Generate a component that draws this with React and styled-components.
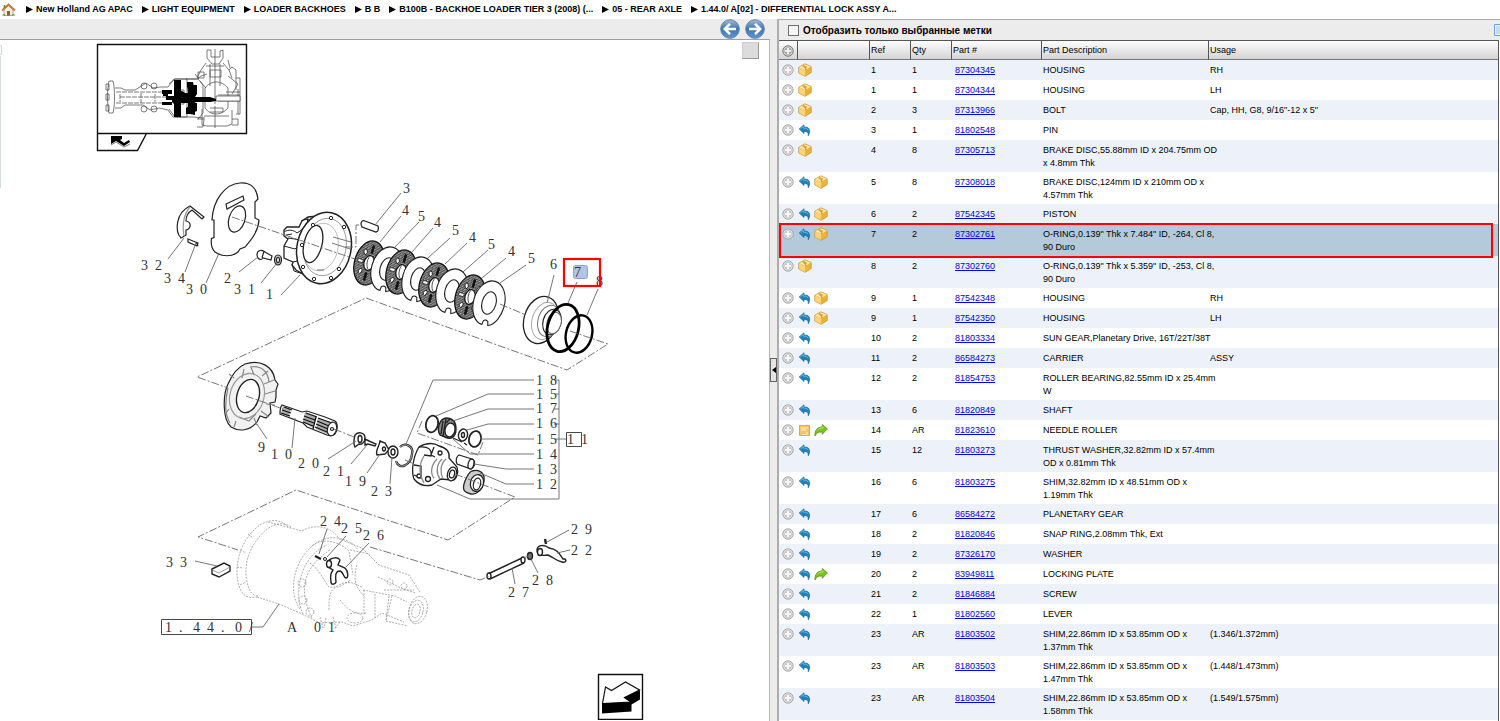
import React, { useState } from 'react';
import styled, { createGlobalStyle } from 'styled-components';

const GlobalStyle = createGlobalStyle`
  * {
    box-sizing: border-box;
  }

  body {
    margin: 0;
    background: #fff;
    color: #000;
    font-family: 'Liberation Sans', Arial, sans-serif;
    font-size: 9px;
    line-height: 13px;
  }
`;

const Page = styled.div`
  display: flex;
  flex-direction: column;
  min-height: 100vh;
`;

const Breadcrumbs = styled.nav`
  display: flex;
  align-items: center;
  gap: 9px;
  height: 19px;
  padding-left: 1px;
  overflow: hidden;
  white-space: nowrap;
`;

const Crumb = styled.a`
  display: flex;
  align-items: center;
  gap: 3px;
  color: #000;
  font-size: 9px;
  font-weight: bold;
  text-decoration: none;
`;

const HomeLink = styled.a`
  display: flex;
  margin-right: 1px;
`;

const Workspace = styled.main`
  display: grid;
  grid-template-columns: minmax(0, 770fr) 9px minmax(0, 721fr);
  flex: 1;
`;

const DrawingPane = styled.section`
  display: flex;
  flex-direction: column;
  overflow: hidden;
`;

const Toolbar = styled.div`
  display: flex;
  align-items: center;
  height: 21px;
  background: #ececec;
  overflow: hidden;
`;

const DrawingToolbar = styled(Toolbar)`
  justify-content: flex-end;
  gap: 5px;
  padding-right: 5px;
  border-bottom: 1px solid #a0a0a0;
`;

const RoundButton = styled.button`
  display: flex;
  width: 20px;
  height: 20px;
  padding: 0;
  border: 0;
  background: none;
`;

const Canvas = styled.div`
  display: flex;
  flex: 1;
  position: relative;
  border-right: 1px solid #b4b4b4;
`;

const SquareButton = styled.button`
  position: absolute;
  top: 2px;
  right: 10px;
  width: 17px;
  height: 17px;
  padding: 0;
  border: 1px solid #999;
  border-top-color: #ccc;
  border-left-color: #ccc;
  background: #dcdcdc;
`;

const Callout = styled.text`
  font-family: 'Liberation Serif', 'Times New Roman', serif;
  font-size: 14px;
  fill: #333;
`;

const Splitter = styled.div`
  display: flex;
  align-items: center;
  background: #ececec;
  border-right: 2px solid #adadad;
`;

const SplitterHandle = styled.button`
  display: flex;
  align-items: center;
  justify-content: center;
  width: 8px;
  height: 24px;
  padding: 0;
  border: 1px solid #666;
  background: #e4e4e4;
`;

const PartsPane = styled.section`
  display: flex;
  flex-direction: column;
  overflow: hidden;
`;

const PartsToolbar = styled(Toolbar)`
  justify-content: space-between;
  padding-left: 9px;
  border-top: 1px solid #aaa;
`;

const FilterLabel = styled.label`
  display: flex;
  align-items: center;
  gap: 4px;
  font-size: 10px;
  font-weight: bold;
`;

const Checkbox = styled.input`
  appearance: none;
  width: 11px;
  height: 11px;
  margin: 0;
  border: 1px solid #6e6e6e;
  background: #f6f6f6;

  &:checked {
    background: #3a6ea5;
  }
`;

const TableFrame = styled.div`
  flex: 1;
  margin-right: 1px;
  border-right: 1px solid #555;
`;

const Table = styled.table`
  width: 100%;
  table-layout: fixed;
  border-collapse: separate;
  border-spacing: 0;
`;

const HeadCell = styled.th`
  height: 20px;
  padding: 0 0 0 1px;
  border-top: 1px solid #555;
  border-bottom: 1px solid #777;
  border-left: ${({ $first }) => ($first ? '0' : '1px solid #555')};
  background: linear-gradient(#fdfdfd, #d4d4d4);
  font-weight: normal;
  text-align: left;
`;

const Row = styled.tr`
  position: relative;
  background: ${({ $selected }) => ($selected ? '#b4cada' : '#fff')};

  &:nth-child(odd) {
    background: ${({ $selected }) => ($selected ? '#b4cada' : '#edf2fa')};
  }
`;

const Cell = styled.td`
  padding: ${({ $indent }) => `4px 0 2px ${$indent || 2}px`};
  vertical-align: top;
  white-space: pre;
  height: 20px;
`;

const IconCell = styled(Cell)`
  padding: 3px 0 0 1px;
`;

const Icons = styled.div`
  display: flex;
  gap: 3px;
  height: 14px;
`;

const ExpandButton = styled.button`
  display: flex;
  margin: 1px 0 0 2px;
  padding: 0;
  border: 0;
  background: none;
`;

const PartLink = styled.a`
  color: #0000f0;
`;

const RowFrame = styled.span`
  position: absolute;
  z-index: 1;
  top: -1px;
  right: 5px;
  bottom: -2px;
  left: 0;
  border: 2px solid #f00;
  pointer-events: none;
`;

const CRUMBS = [
  'New Holland AG APAC',
  'LIGHT EQUIPMENT',
  'LOADER BACKHOES',
  'B B',
  'B100B - BACKHOE LOADER TIER 3 (2008) (...',
  '05 - REAR AXLE',
  '1.44.0/  A[02] - DIFFERENTIAL LOCK ASSY A...',
];

// icons: b = box, u = undo arrow, n = note, f = forward arrow
const PARTS = [
  ['b', '1', '1', '87304345', 'HOUSING', 'RH'],
  ['b', '1', '1', '87304344', 'HOUSING', 'LH'],
  ['b', '2', '3', '87313966', 'BOLT', 'Cap, HH, G8, 9/16"-12 x 5"'],
  ['u', '3', '1', '81802548', 'PIN', ''],
  ['b', '4', '8', '87305713', 'BRAKE DISC,55.88mm ID x 204.75mm OD\nx 4.8mm Thk', ''],
  ['ub', '5', '8', '87308018', 'BRAKE DISC,124mm ID x 210mm OD x\n4.57mm Thk', ''],
  ['ub', '6', '2', '87542345', 'PISTON', ''],
  ['ub', '7', '2', '87302761', 'O-RING,0.139" Thk x 7.484" ID, -264, Cl 8,\n90 Duro', ''],
  ['b', '8', '2', '87302760', 'O-RING,0.139" Thk x 5.359" ID, -253, Cl 8,\n90 Duro', ''],
  ['ub', '9', '1', '87542348', 'HOUSING', 'RH'],
  ['ub', '9', '1', '87542350', 'HOUSING', 'LH'],
  ['u', '10', '2', '81803334', 'SUN GEAR,Planetary Drive, 16T/22T/38T', ''],
  ['u', '11', '2', '86584273', 'CARRIER', 'ASSY'],
  ['u', '12', '2', '81854753', 'ROLLER BEARING,82.55mm ID x 25.4mm\nW', ''],
  ['u', '13', '6', '81820849', 'SHAFT', ''],
  ['nf', '14', 'AR', '81823610', 'NEEDLE ROLLER', ''],
  ['u', '15', '12', '81803273', 'THRUST WASHER,32.82mm ID x 57.4mm\nOD x 0.81mm Thk', ''],
  ['u', '16', '6', '81803275', 'SHIM,32.82mm ID x 48.51mm OD x\n1.19mm Thk', ''],
  ['u', '17', '6', '86584272', 'PLANETARY GEAR', ''],
  ['u', '18', '2', '81820846', 'SNAP RING,2.08mm Thk, Ext', ''],
  ['u', '19', '2', '87326170', 'WASHER', ''],
  ['uf', '20', '2', '83949811', 'LOCKING PLATE', ''],
  ['u', '21', '2', '81846884', 'SCREW', ''],
  ['u', '22', '1', '81802560', 'LEVER', ''],
  ['u', '23', 'AR', '81803502', 'SHIM,22.86mm ID x 53.85mm OD x\n1.37mm Thk', '(1.346/1.372mm)'],
  ['u', '23', 'AR', '81803503', 'SHIM,22.86mm ID x 53.85mm OD x\n1.47mm Thk', '(1.448/1.473mm)'],
  ['u', '23', 'AR', '81803504', 'SHIM,22.86mm ID x 53.85mm OD x\n1.58mm Thk', '(1.549/1.575mm)'],
];

const HomeIcon = () => (
  <svg width="15" height="14" viewBox="0 0 15 14">
    <path d="M3 6.5 7.5 2.5 12 6.5V12.5H3Z" fill="#f6efe0" stroke="#9a8a70" strokeWidth=".8" />
    <path d="M1 7.5 7.5 1.5 14 7.5" fill="none" stroke="#c4783a" strokeWidth="1.8" />
    <path d="M3.5 2v3" stroke="#9a6a40" strokeWidth="1.5" />
    <path d="M6 8h3v4.5H6Z" fill="#87603c" />
    <path d="M1 12.500c1-2 3-1.500 3.500 0ZM10.500 12.500c.5-1.500 3-2 4 0Z" fill="#5a9c3c" />
  </svg>
);

const CrumbArrow = () => (
  <svg width="7" height="7" viewBox="0 0 7 7">
    <path d="M0 0 7 3.5 0 7Z" />
  </svg>
);

const RoundArrow = ({ flip }) => (
  <svg width="20" height="20" viewBox="0 0 20 20">
    <defs>
      <linearGradient id="round" x1="0" y1="0" x2="0" y2="1">
        <stop offset="0" stopColor="#9dbbd9" />
        <stop offset=".5" stopColor="#3f74ac" />
        <stop offset="1" stopColor="#5c9bd4" />
      </linearGradient>
    </defs>
    <circle cx="10" cy="10" r="9.3" fill="url(#round)" stroke="#6382a6" />
    <path
      d="M16 10H5.5M10 4.800 4.800 10 10 15.200"
      fill="none"
      stroke="#fff"
      strokeWidth="2.6"
      transform={flip ? 'matrix(-1 0 0 1 20 0)' : undefined}
    />
  </svg>
);

const PlusIcon = ({ dark }) => (
  <svg width="12" height="12" viewBox="0 0 12 12">
    <circle cx="6" cy="6" r="5.2" fill={dark ? '#aaa' : '#c9c9c9'} stroke={dark ? '#777' : '#a8a8a8'} />
    <circle cx="6" cy="6" r="4.1" fill="none" stroke="#e6e6e6" strokeWidth=".7" />
    <path d="M6 3v6M3 6h6" stroke="#fff" strokeWidth="1.6" />
  </svg>
);

const BoxIcon = () => (
  <svg width="14" height="14" viewBox="0 0 14 14">
    <path d="M.8 4.200 7 .8l6.200 2.800v6L7.200 13.300.8 10Z" fill="#f0b036" stroke="#c9943a" strokeWidth=".8" />
    <path d="M1.200 4.200 7 1.200l5.800 2.600L7.200 7Z" fill="#fdeab0" />
    <path d="M7.200 7v6L1.200 9.900V4.400Z" fill="#fad478" />
    <path d="m5.500 2 4 2-1 .6v2l-1.500.8V5.600L4 3Z" fill="#d9a23c" />
  </svg>
);

const UndoIcon = () => (
  <svg width="13" height="14" viewBox="0 0 13 14">
    <path d="M1.200 6 6 1.800v2.300c5.200-.4 7.200 3 4.300 8.700.3-3-.9-4.400-4.300-4.300v2Z" fill="#2080ba" stroke="#1b6898" strokeWidth=".7" />
    <path d="m2.500 5.900 2.800-2.500v1.700c2.700 0 4.300.6 5 2" fill="none" stroke="#79c3e6" strokeWidth=".8" />
  </svg>
);

const ForwardIcon = () => (
  <svg width="14" height="14" viewBox="0 0 14 14">
    <path d="M13.300 5.800 8.300 1.500v2.400C3.500 4 .8 7 .9 13c1.200-3 3.500-4.300 7.400-4v2.300Z" fill="#7ac51c" stroke="#4f9414" strokeWidth=".8" />
    <path d="M3 7.500c1.500-2 3.500-2.500 6-2.500V3.500" fill="none" stroke="#c0ea7c" strokeWidth=".8" />
  </svg>
);

const NoteIcon = () => (
  <svg width="13" height="14" viewBox="0 0 13 14">
    <path d="M1.500 2.500h10v10h-10Z" fill="#fbc463" stroke="#eda53a" />
    <path d="M3 5h7M3 7h5M4 11.500h5V9" stroke="#fff0cf" fill="none" />
  </svg>
);

const ReportIcon = () => (
  <svg width="6" height="12" viewBox="0 0 6 12">
    <path d="M.5.5H7v11H.5Z" fill="#f0f6ff" stroke="#6f9fd8" />
    <path d="M2 3h5M2 5h5M2 7h5M2 9h5" stroke="#9cc0ea" />
  </svg>
);

const ICONS = { b: BoxIcon, u: UndoIcon, n: NoteIcon, f: ForwardIcon };

const CALLOUTS = [
  [141, 270, '3 2'], [164, 283, '3 4'], [186, 294, '3 0'], [224, 283, '2'], [234, 294, '3 1'],
  [266, 299, '1'], [403, 193, '3'], [402, 215, '4'], [418, 221, '5'], [434, 227, '4'],
  [452, 235, '5'], [469, 242, '4'], [488, 249, '5'], [508, 256, '4'], [528, 263, '5'],
  [550, 269, '6'], [574, 277, '7'], [596, 286, '8'], [258, 452, '9'], [271, 459, '1 0'],
  [298, 468, '2 0'], [323, 476, '2 1'], [345, 486, '1 9'], [371, 496, '2 3'],
  [536, 385, '1 8'], [536, 399, '1 5'], [536, 413, '1 7'], [536, 428, '1 6'],
  [536, 444, '1 5'], [536, 459, '1 4'], [536, 474, '1 3'], [536, 489, '1 2'],
  [567, 444, '1 1'], [320, 526, '2 4'], [341, 533, '2 5'], [363, 540, '2 6'],
  [166, 567, '3 3'], [165, 632, '1 . 4 4 . 0 /'], [287, 632, 'A'], [314, 632, '0 1'],
  [571, 534, '2 9'], [571, 555, '2 2'], [532, 585, '2 8'], [508, 597, '2 7'],
];

const LEADERS = [
  '168,259 184,238', '185,272 196,243', '206,283 219,253', '239,272 258,257', '261,283 277,263',
  '281,295 300,275', '401,193 375,225', '401,216 380,242', '419,222 395,247', '433,228 412,252',
  '450,238 428,258', '467,243 445,264', '488,250 463,272', '506,258 482,278', '526,265 500,283',
  '554,275 547,303', '577,282 568,303', '598,289 587,315', '267,439 257,424', '292,448 295,418',
  '328,459 356,441', '351,464 367,445', '367,473 380,454', '390,484 392,457',
  '534,380 433,380 406,444', '534,394 488,394 436,416', '534,409 488,409 453,421',
  '534,424 488,424 467,430', '534,439 481,439', '534,454 470,454 453,439',
  '534,469 506,469 474,464', '534,484 506,484 480,473', '554,380 559,380 559,499 470,499 437,485',
  '554,394 559,394', '554,409 559,409', '554,424 559,424', '554,439 567,439',
  '327,529 319,554', '346,536 327,557', '369,543 346,567', '195,561 217,566',
  '252,627 263,627 279,604', '569,530 547,542', '570,550 557,553', '538,573 531,559', '515,584 512,568',
];

const CENTERLINES = [
  '232,217 355,259', '345,247 356,247 356,225 362,225', '500,304 526,315', '570,331 608,344 567,370 366,298 197,377 228,388',
  '246,396 283,409', '334,429 354,437', '405,460 412,463', '455,474 515,497 448,540 296,490 198,537 238,550',
  '370,547 480,580 490,576', '422,421 417,433 478,455 483,442', '524,558 530,555',
];

const FRICTION_DISCS = [[369, 263], [401, 272], [434, 285], [470, 297]];
const STEEL_DISCS = [[387, 269], [418, 279], [452, 291], [489, 303]];
const SLOTS = [0, 45, 90, 135, 180, 225, 270, 315];

const FrictionDisc = ({ x, y }) => (
  <g transform={`translate(${x} ${y}) rotate(16)`}>
    <ellipse rx="14.5" ry="22.5" fill="#fff" />
    <ellipse rx="14.5" ry="22.5" fill="url(#grain)" stroke="#111" strokeWidth="1.3" />
    <g transform="scale(.64 1)">
      {SLOTS.map((angle, i) => (
        <g key={angle} transform={`rotate(${angle})`}>
          {i % 2 ? (
            <ellipse cx="0" cy="-14" rx="2.4" ry="3" fill="#fff" stroke="#111" />
          ) : (
            <path d="M-1.500-18v8h3v-8Z" fill={i % 4 ? '#fff' : '#111'} stroke="#111" strokeWidth=".8" />
          )}
        </g>
      ))}
    </g>
    <ellipse rx="5" ry="7.5" fill="#fff" stroke="#111" strokeWidth="1.2" />
    <path d="M-1-6.500C-3-3-2 4 1 6.500" fill="none" stroke="#333" strokeWidth=".8" />
  </g>
);

const SteelDisc = ({ x, y }) => (
  <g transform={`translate(${x} ${y}) rotate(16)`} fill="#fff" stroke="#222" strokeWidth="1.1">
    <path d="M5 22C12 19 15.500 9 15.500 0 15.500-12.500 8.500-22.500 0-22.500S-15.500-12.500-15.500 0-9 22.500-1 22.500l.5-4c1-1.500 3.300-1.500 4.500-.3Z" />
    <ellipse rx="7" ry="11.5" />
  </g>
);

const Thumbnail = () => (
  <g fill="none" stroke="#444" strokeWidth=".7">
    <path d="M97.500 44.500h149v89h-149ZM97.500 133.500v17h40l9-17" stroke="#111" strokeWidth="1.4" />
    <path d="M109 81h4c2 7 2 25 0 32h-4c-2-8-2-24 0-32ZM106 84h3v6h-3ZM106 94h3v6h-3ZM106 105h3v6h-3Z" />
    <path d="M115 88h6l4 2h10l5-3 6-4 7 5 7-1h8l6-8h23l4-3 6-2M115 108h6l4-3h18l7 5 9-2 9 2 5 7h20l12 1" />
    <path d="M116 92h50M120 97h46M116 103h50M141 93v10M155 94v8M120 94v8" strokeDasharray="5 1" />
    <circle cx="144" cy="86" r="3" /><circle cx="154" cy="86" r="3" />
    <circle cx="144" cy="109" r="3" /><circle cx="154" cy="109" r="3" />
    <path d="M169 84l6-5h12v38h-12l-6-8M176 90h8v14h-8M186 79h12l5 6v28l-5 6" />
    <path d="M207 50v8l5 6h7l4-6v-8l-3 1v6h-9v-7ZM210 64v22M220 64v22M206 63l-5 7-4 8M223 63l6 7 3 8M210 70h11v7h-11ZM215 49v55" />
    <path d="M198 72h6v6h-6ZM229 70l3-3 4 3v20M236 78h4v36h-4M205 88c6-8 16-8 23 0v20c-7 8-17 8-23 0ZM228 76l10 8-6 10M206 66h18M226 92h14M218 95h22M218 101h22" />
    <path d="M202 109v16l5 1h20l5-2v-14M197 119h7l-1 8h-6M232 119h6v6h-6M210 108h13v4h-13M204 116h25M215 106v22M195 74l4 5M200 81l6 7M228 60l2 8M238 89v25" />
    <path d="M216 96h24v5h-24Z" fill="#fff" />
    <g fill="#000" stroke="none">
      <path d="M174 80h7v11h1l3 2h4v-5l-2-1v-5h6l1 5h3v7l-2 3h15l6 2v2l-6 1h-15l2 3-2 3v7l-5-1h-4v-6l3-2v-3h-8v14h-7v-13l-2-2v-4l2-2Z" />
      <path d="M162 90h10v4h-10ZM162 102h10v3h-10ZM166 96h10v4h-10ZM187 83l3 2h7v9h-9ZM188 103h9v8l-5 2-4-1ZM163 94h5v2h-5Z" />
      <path d="M111 136h11v3l-2 1 4 3 5-3 1 2-6 4-8-5-5 3Z" />
    </g>
    <path d="M111 145l5-3 8 5 6-3" />
  </g>
);

const AxleHousing = () => (
  <g fill="#fff" stroke="#222">
    <path d="M284 230l3-3h12l3-6 6-4 10-1 14 14v50l-22-2-14-8-4-5 1-3-9-4v-12l4-7-4-3Z" strokeWidth="1.3" />
    <path d="M284 232c4-3 10-2 13 1l6-4M284 246l11 3 8-7M293 262l9-2M301 221c5-3 12-1 14 3M308 217l-1 8M292 264l2 7 9 3M288 238l13 2M286 235l6-1" fill="none" />
    <ellipse cx="324" cy="248" rx="27" ry="36" transform="rotate(12 324 248)" strokeWidth="1.5" />
    <ellipse cx="325" cy="247" rx="21" ry="29" transform="rotate(12 325 247)" strokeWidth=".7" stroke="#777" />
    <ellipse cx="321" cy="247" rx="17" ry="24" transform="rotate(12 321 247)" strokeWidth=".6" stroke="#999" />
    <ellipse cx="313" cy="244" rx="9" ry="19" transform="rotate(14 313 244)" strokeWidth="1.3" />
    <path d="M333 237l18 5M332 243l18 6M317 270h7" fill="none" stroke="#777" />
    {[[331, 218], [344, 227], [313, 225], [302, 245], [303, 267], [314, 279], [331, 278], [339, 269]].map(([x, y]) => (
      <circle key={`${x}-${y}`} cx={x} cy={y} r="1.7" />
    ))}
  </g>
);

const GhostHousing = () => (
  <g fill="none" stroke="#999" strokeWidth=".8" strokeDasharray="2 1.2">
    <path d="M288 527c-8-10-24-8-35 4-15 16-19 38-14 55 3 9 8 13 18 11M291 527c-8-6-20-4-31 9-13 15-17 33-12 50 2 6 5 10 10 10" />
    <path d="M268 522l34 9c13-8 31-4 37 8l23 9 17 17 30 10 11 17M257 597l22 7 21 9 20 10 22-1 11 4 19-6 10-7 22 9" />
    <path d="M300 609c-14-19-5-58 24-70 13-4 29 2 34 11M303 614c-10-20-3-58 24-69M312 618c-15-30-7-52 18-68" />
    <path d="M310 563c10 7 15 20 19 24l10 0 12-7M329 610c0-14 0-20 10-25 9-5 16-2 24 3M340 600c7 9 14 15 26 13M357 565c-5 16 0 24 8 32M364 590v25M375 594v24M389 596l-3 25M363 590l32 6 12 6M378 577l25 12 13 4M384 590h30" />
    <ellipse cx="418" cy="610" rx="9" ry="14" transform="rotate(15 418 610)" />
    <ellipse cx="416" cy="611" rx="7" ry="11" transform="rotate(15 416 611)" />
    <ellipse cx="416" cy="611" rx="4" ry="7" transform="rotate(15 416 611)" />
    <circle cx="302" cy="583" r="4" /><circle cx="303" cy="600" r="4" /><circle cx="310" cy="612" r="4" />
    <circle cx="390" cy="582" r="3" /><circle cx="404" cy="586" r="3" /><ellipse cx="355" cy="618" rx="8" ry="5" />
    <path d="M320 617l3 11M326 618l-2 10M333 617l3 11M340 622l-6 8M350 550l20 4M392 596l-6 25 22 5M312 546c10-8 25-6 37 5l4 24M248 534l5 4M240 550l6 3M237 567l6 1M240 585l6-3" />
  </g>
);

const ExplodedView = () => (
  <svg width="769" height="680" viewBox="0 40 769 680" role="img" aria-label="Differential lock assembly">
    <defs>
      <pattern id="grain" width="3" height="3" patternUnits="userSpaceOnUse">
        <rect width="3" height="3" fill="#858585" />
        <path d="M0 0h1v1H0ZM2 1h1v1H2ZM1 2h1v1H1Z" fill="#3c3c3c" />
        <path d="M1 0h1v1H1Z" fill="#bbb" />
      </pattern>
    </defs>

    <path d="M0 45.500h1.500v9H0M.5 56v132" fill="none" stroke="#d5dbe3" />
    <Thumbnail />
    <GhostHousing />

    {/* shoe, pin and shield */}
    <g fill="#fff" stroke="#222" strokeWidth="1.2">
      <path d="M190 206l14 11-2 2-10-9c-5 3-6 7-6 11 6 1 5 8 0 9v5l-5 3c-6-6-6-25 9-32Z" />
      <path d="M190 207c-6 7-8 17-6 29" stroke="#999" fill="none" />
      <path d="M188 239l10 4-1 3-9-4ZM196 242l2 4" />
      <path d="M212 220c1-20 13-36 28-37 12-1 17 7 18 16l-3 3v16l4 2c-1 13-9 21-14 27l-5 2-2 3c-6 5-16 5-23 0-4-4-4-10-3.500-13.500l2.500-1v-17.500Z" />
      <path d="M226 204l17-8 1 4-17 9Z" />
      <ellipse cx="237" cy="219" rx="8" ry="13.5" transform="rotate(18 237 219)" />
      <path d="M257 255c0-5 5-6 8-3l7 4-1 4-8-2c-2 3-6 1-6-3ZM264 251l-2 7" />
      <ellipse cx="278" cy="260" rx="3.5" ry="5" fill="#bbb" />
      <ellipse cx="278" cy="260" rx="1.5" ry="2.5" />
    </g>
    <AxleHousing />
    <path d="M361 224c0-3 2-4 4-3l13 5c1 3 0 6-2 6l-14-5Z" fill="#fff" stroke="#222" strokeWidth="1.3" />

    {FRICTION_DISCS.map(([x, y], i) => (
      <g key={x}>
        <FrictionDisc x={x} y={y} />
        <SteelDisc x={STEEL_DISCS[i][0]} y={STEEL_DISCS[i][1]} />
      </g>
    ))}

    {/* piston and o-rings */}
    <g fill="#fff" stroke="#222">
      <ellipse cx="541" cy="320" rx="17" ry="24" transform="rotate(16 541 320)" strokeWidth="1.3" />
      <ellipse cx="545" cy="321" rx="13" ry="19" transform="rotate(16 545 321)" stroke="#aaa" />
      <ellipse cx="549" cy="321" rx="11" ry="16" transform="rotate(16 549 321)" stroke="#777" />
      <ellipse cx="552" cy="322" rx="9" ry="13" transform="rotate(16 552 322)" strokeWidth="1.2" />
      <ellipse cx="554" cy="323" rx="7" ry="11" transform="rotate(16 554 323)" stroke="#666" />
      <ellipse cx="563" cy="328" rx="15.5" ry="24" transform="rotate(14 563 328)" fill="none" stroke="#000" strokeWidth="2.8" />
      <ellipse cx="579" cy="334" rx="13" ry="19" transform="rotate(14 579 334)" fill="none" stroke="#000" strokeWidth="2.4" />
    </g>

    {/* ring housing 9 and sun gear shaft 10 */}
    <g fill="#f1f1f1" stroke="#222" strokeWidth="1.2">
      <path d="M245 364c15-5 28 2 30 16l3 4-2 6v7l-1 5-5 1 1 10-5 5-6-2-3 6c-7 9-18 10-26 5-9-8-8-33-3-43 4-9 10-17 17-20Z" />
      <path d="M250 367c12-2 18 5 19 15M228 388c-3 13-3 27 2 35M264 384l10-4M265 394l10-3M266 404l9 1M261 411l8 6M254 418l3 7M236 421l-2 6M229 409l-4 5M227 396l-3-3M234 378l-5-4M251 367l3 8M244 369l-2 9M262 376l6-5M239 417l10 4 7-7" fill="none" stroke="#888" />
      <ellipse cx="247" cy="396" rx="17" ry="23" transform="rotate(16 247 396)" fill="none" stroke="#999" />
      <ellipse cx="248" cy="396" rx="11" ry="17" transform="rotate(16 248 396)" fill="#fff" strokeWidth="1.4" />
      <path d="M282 405l20 7 5-1 18 6 10 4c3 2 3 9 0 13-3 2-5 2-8 1l-20-8-4-4-23-9c0-4 0-7 2-9Z" fill="#fff" />
      <path d="M283 406l8 3-2 8-8-3ZM305 412l11 4-3 12-10-6ZM318 418l12 4-3 12-11-5Z" fill="#aaa" stroke="none" />
      <path d="M284 407l8 3M282 410l9 3M281 413l9 3M306 413l11 4M304 416l11 4M303 419l11 4M303 422l10 4M318 418l14 5M317 421l12 5M316 424l12 5M315 427l12 5M316 417l-3 12" fill="none" stroke="#111" />
      <ellipse cx="332" cy="429" rx="4.500" ry="7" transform="rotate(15 332 429)" fill="#fff" />
      <circle cx="332" cy="429" r="1.5" />
    </g>

    {/* locking plate, screw, washers */}
    <g fill="#fff" stroke="#222" strokeWidth="1.4">
      <path d="M355 435c4-4 10-2 10 3s-4 7-6 6l-4 3c-2-3-1-8 0-12Z" />
      <ellipse cx="360" cy="439" rx="2" ry="3.5" />
      <path d="M365 439l4 2 7 3-1 2-7-2-3 1ZM380 441l5 2 4 7-4 4-8 1c-2-4 2-8 3-14Z" />
      <ellipse cx="384" cy="449" rx="1.5" ry="2" />
      <ellipse cx="393" cy="452" rx="5" ry="6" />
      <ellipse cx="393" cy="452" rx="2" ry="3" />
      <path d="M400 447c5-5 14-1 12 7-1 11-13 17-16 7" fill="none" strokeWidth="2.4" />
      <path d="M400 447c5-5 14-1 12 7-1 11-13 17-16 7" fill="none" stroke="#fff" strokeWidth=".6" />
      <ellipse cx="432" cy="424" rx="6" ry="8.5" transform="rotate(14 432 424)" strokeWidth="1.8" fill="none" />
      <path d="M446 418c6 0 10 3 10 11s-5 11-11 8l-5-2c-4-7 0-16 6-17Z" fill="#888" />
      <ellipse cx="450" cy="430" rx="5" ry="7" transform="rotate(14 450 430)" />
      <path d="M443 421l-2 13M446 419l-3 17M450 419l-4 4" />
      <ellipse cx="463" cy="435" rx="4.5" ry="6" transform="rotate(14 463 435)" />
      <ellipse cx="463" cy="435" rx="1.5" ry="2.5" />
      <ellipse cx="475" cy="439" rx="6" ry="8" transform="rotate(14 475 439)" strokeWidth="1.8" fill="none" />
      <path d="M453 438l9 4M464 443l3 2" strokeWidth="1.2" />
    </g>

    {/* carrier, pin and bearing */}
    <g fill="#fff" stroke="#222" strokeWidth="1.3">
      <path d="M419 447c8-5 16-4 20-1 8 2 11 6 10 12l8 9c2 6-1 14-5 13l-11-1-9 6c-8 2-14-1-18-6-3-8-1-22 5-32Z" />
      <path d="M419 447c10-1 13 3 12 9l-7-1M414 465l7 1v12l-7-3M434 447l-3 8 4 2" fill="none" />
      <circle cx="440" cy="453" r="2" /><circle cx="428" cy="479" r="2.5" /><circle cx="419" cy="476" r="2" />
      <path d="M437 459c-6 6-7 14-3 19M442 459c-6 6-6 14-2 20M446 459c-6 5-6 14-3 20M424 456c-5 8-5 18 0 27" fill="none" stroke="#888" />
      <ellipse cx="452" cy="474" rx="4.5" ry="7" transform="rotate(14 452 474)" />
      <ellipse cx="452" cy="474" rx="2.5" ry="4" transform="rotate(14 452 474)" />
      <path d="M459 455l13 4c4 2 3 8-1 10l-14-5c-2-4 0-8 2-9Z" />
      <ellipse cx="471" cy="464" rx="2.8" ry="5" transform="rotate(14 471 464)" />
      <path d="M472 471c8-2 13 2 12 10-1 8-7 14-13 13-8-2-9-5-6-13 2-5 4-9 7-10Z" fill="#ccc" />
      <ellipse cx="477" cy="483" rx="6.5" ry="8.5" transform="rotate(14 477 483)" />
      <ellipse cx="477" cy="484" rx="3.5" ry="6" transform="rotate(14 477 484)" />
    </g>

    {/* key, spring, fork */}
    <g fill="#fff" stroke="#222" strokeWidth="1.4">
      <path d="M212 569l12-6 6 3v5l-11 6-7-3Z" />
      <path d="M230 567l-11 6-7-3" fill="none" stroke="#777" strokeWidth=".7" />
      <path d="M315 556l6 3" strokeWidth="2.4" />
      <circle cx="325" cy="559" r="1.500" strokeWidth="1" />
      <path d="M328 563c0-5 10-7 12-3l-2 5 7 3c4 4 3 10 1 10-3 0-2-6-6-7-4 0-5 3-4 11-1 3-5 3-5 0-1-7 0-9 2-12l-5-3Z" />
      <ellipse cx="329" cy="564" rx="2.500" ry="3.500" />
      <path d="M488 574l34-16M490 579l34-16" fill="none" />
      <ellipse cx="489" cy="576" rx="2" ry="3" /><ellipse cx="523" cy="560" rx="2" ry="3" />
      <ellipse cx="530" cy="556" rx="2.5" ry="3.5" fill="#777" />
      <path d="M537 550c0-5 7-6 12-2 9 1 11 7 14 11h2c2 2 0 4-3 3-6-1-9-5-14-7-7 1-11 0-11-5Z" />
      <ellipse cx="540" cy="552" rx="2.5" ry="3.5" />
      <path d="M545 539l1 5" strokeWidth="2.4" />
    </g>

    <g fill="none" stroke="#666" strokeWidth=".9">
      {CENTERLINES.map((points) => (
        <polyline key={points} points={points} strokeDasharray="8 2 2 2" />
      ))}
      {LEADERS.map((points) => (
        <polyline key={points} points={points} />
      ))}
      <path d="M161.500 619.500h90v15h-90ZM566.500 432.500h15v14h-15Z" stroke="#333" />
    </g>

    <rect x="573.5" y="265.5" width="14" height="13" rx="2" fill="#b3c5e5" stroke="#8ba2d8" />
    {CALLOUTS.map(([x, y, label]) => (
      <Callout key={`${x}-${y}`} y={y} x={[...label].map((_, i) => x + i * 7).join(' ')}>
        {label}
      </Callout>
    ))}
    <rect x="564" y="259" width="36" height="27" fill="none" stroke="#f00" strokeWidth="2.2" />

    <path d="M598.500 674.500h44v45h-44Z" fill="#fff" stroke="#111" strokeWidth="1.4" />
    <path d="M602.500 703.500l3-16.500 6 3.500 14-8.500 14 8-15 7.500 6.500 4.500Z" fill="#fff" stroke="#111" strokeWidth="1.2" />
    <path d="M602 703.500l29-1.500-7-4.500 16-7.500v9.500l-8.500 5v7l-29.500 2Z" />
  </svg>
);

const PartRow = ({ part }) => {
  const [icons, reference, qty, number, description, usage] = part;
  const selected = number === '87302761';

  return (
    <Row $selected={selected}>
      <IconCell>
        <ExpandButton aria-label={`Expand ${number}`}>
          <PlusIcon />
        </ExpandButton>
        {selected && <RowFrame />}
      </IconCell>
      <IconCell>
        <Icons>
          {[...icons].map((name) => {
            const Icon = ICONS[name];
            return <Icon key={name} />;
          })}
        </Icons>
      </IconCell>
      <Cell>{reference}</Cell>
      <Cell>{qty}</Cell>
      <Cell $indent={4}>
        <PartLink href="#">{number}</PartLink>
      </Cell>
      <Cell>{description}</Cell>
      <Cell>{usage}</Cell>
    </Row>
  );
};

const App = () => {
  const [onlySelected, setOnlySelected] = useState(false);

  return (
    <Page>
      <GlobalStyle />
      <Breadcrumbs>
        <HomeLink href="#" aria-label="Home">
          <HomeIcon />
        </HomeLink>
        {CRUMBS.map((crumb) => (
          <Crumb href="#" key={crumb}>
            <CrumbArrow />
            {crumb}
          </Crumb>
        ))}
      </Breadcrumbs>
      <Workspace>
        <DrawingPane>
          <DrawingToolbar>
            <RoundButton aria-label="Previous">
              <RoundArrow />
            </RoundButton>
            <RoundButton aria-label="Next">
              <RoundArrow flip />
            </RoundButton>
          </DrawingToolbar>
          <Canvas>
            <ExplodedView />
            <SquareButton aria-label="Overview" />
          </Canvas>
        </DrawingPane>
        <Splitter>
          <SplitterHandle aria-label="Collapse">
            <svg width="4" height="6" viewBox="0 0 4 6">
              <path d="M4 0v6L0 3Z" />
            </svg>
          </SplitterHandle>
        </Splitter>
        <PartsPane>
          <PartsToolbar>
            <FilterLabel>
              <Checkbox
                type="checkbox"
                checked={onlySelected}
                onChange={(e) => setOnlySelected(e.target.checked)}
              />
              Отобразить только выбранные метки
            </FilterLabel>
            <ReportIcon />
          </PartsToolbar>
          <TableFrame>
            <Table>
              <colgroup>
                <col width="18" />
                <col width="72" />
                <col width="41" />
                <col width="41" />
                <col width="90" />
                <col width="167" />
                <col />
              </colgroup>
              <thead>
                <tr>
                  <HeadCell $first>
                    <ExpandButton aria-label="Expand all">
                      <PlusIcon dark />
                    </ExpandButton>
                  </HeadCell>
                  <HeadCell />
                  <HeadCell>Ref</HeadCell>
                  <HeadCell>Qty</HeadCell>
                  <HeadCell>Part #</HeadCell>
                  <HeadCell>Part Description</HeadCell>
                  <HeadCell>Usage</HeadCell>
                </tr>
              </thead>
              <tbody>
                {PARTS.map((part) => (
                  <PartRow key={part[3]} part={part} />
                ))}
              </tbody>
            </Table>
          </TableFrame>
        </PartsPane>
      </Workspace>
    </Page>
  );
};

export default App;
